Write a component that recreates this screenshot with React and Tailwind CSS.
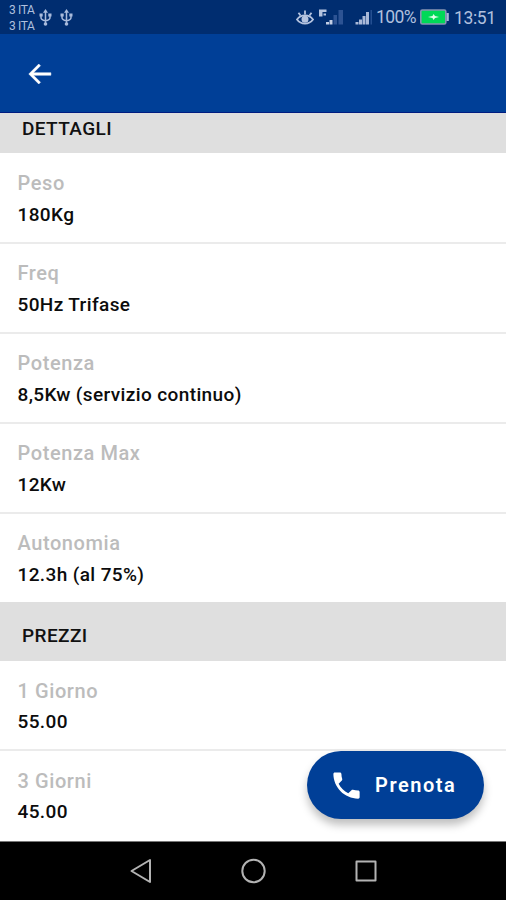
const details = [
  ['Peso', '180Kg'],
  ['Freq', '50Hz Trifase'],
  ['Potenza', '8,5Kw (servizio continuo)'],
  ['Potenza Max', '12Kw'],
  ['Autonomia', '12.3h (al 75%)'],
];

const prices = [
  ['1 Giorno', '55.00'],
  ['3 Giorni', '45.00'],
];

function Usb() {
  return (
    <svg className="h-[17px] w-[13px]" viewBox="0 0 13 17" fill="none" stroke="#a9bbdc" strokeWidth="1.500">
      <path d="M6.500 2v13M2 5v3.500c0 1.800 1.500 2.800 4.500 3.300M11 5v3.500c0 1.800-1.500 2.800-4.500 3.300" />
      <path d="M6.500 0 9 3.800H4z" fill="#a9bbdc" stroke="none" />
      <circle cx="6.500" cy="15" r="1.800" fill="#a9bbdc" stroke="none" />
      <path d="M.5 4.500h3.200v3H.5zM9.300 4.500h3.200v3H9.300z" fill="#a9bbdc" stroke="none" />
    </svg>
  );
}

function Eye() {
  return (
    <svg className="h-[17px] w-[18px]" viewBox="0 0 18 17" fill="none" stroke="#b4c3df" strokeWidth="1.800">
      <path d="M1 10.500C5 5 13 5 17 10.500 13 16 5 16 1 10.500z" />
      <circle cx="9" cy="10.300" r="2.600" fill="#b4c3df" />
      <path d="M9 5.500V1.500M4.500 6.500 2.500 3.800M13.500 6.500l2-2.700" />
    </svg>
  );
}

function RoamingSignal() {
  return (
    <svg className="h-[17px] w-[26px]" viewBox="0 0 26 17">
      <path d="M1 .5h7.500V3H4.500v4.500H1zM5.500 4.500h2.500v2H5.500z" fill="#b4c3df" />
      <path d="M8 13h3v2.500H8zM11.500 11h3v4.500h-3z" fill="#c2cee5" />
      <path d="M15.500 6h3.500v9.500h-3.500zM20.500 1H25v14.500h-4.500z" fill="#2d5393" />
    </svg>
  );
}

function Signal() {
  return (
    <svg className="h-[17px] w-[18px]" viewBox="0 0 18 17">
      <path d="M.5 13h3v2.500h-3zM4 10.500h3v5H4zM7.500 7H10.500v8.500h-3zM11 3h3v12.500h-3z" fill="#a9b9d8" />
      <path d="M15.500 1H17v14.500h-1.500z" fill="#244f91" />
    </svg>
  );
}

function Battery() {
  return (
    <svg className="h-[16px] w-[29px]" viewBox="0 0 29 16">
      <rect x=".8" y="1" width="25" height="14" rx="1.500" fill="#00d957" stroke="#8795b2" strokeWidth="1.600" />
      <path d="M26.500 4h2.300v8h-2.300z" fill="#a9b9d8" />
      <path d="M8 8l4.500-1 1-2 1.500 2 4 1-4 1-1.500 2-1-2z" fill="#e1ffe9" />
    </svg>
  );
}

function StatusBar() {
  return (
    <div className="flex h-[34px] shrink-0 items-start justify-between bg-[#002d70] pr-[11px] pl-[9px] text-[#b0c0de]">
      <div className="flex items-start">
        <div className="w-[30px] pt-[3px] text-[12px] leading-[15.500px] tracking-[-0.35px] whitespace-nowrap">
          <div>3 ITA</div>
          <div>3 ITA</div>
        </div>
        <div className="flex gap-[8px] pt-[9px]">
          <Usb />
          <Usb />
        </div>
      </div>
      <div className="flex items-start">
        <div className="flex pt-[9px]">
          <Eye />
          <div className="ml-[4px]"><RoamingSignal /></div>
          <div className="ml-[11px]"><Signal /></div>
        </div>
        <span className="ml-[3px] w-[40px] pt-[7px] text-[17.500px] leading-[20px] tracking-[-0.6px] whitespace-nowrap">100%</span>
        <div className="ml-[4px] pt-[9px]"><Battery /></div>
        <span className="ml-[5px] w-[41px] pt-[8px] text-[17.500px] leading-[20px] tracking-[-0.35px] whitespace-nowrap">13:51</span>
      </div>
    </div>
  );
}

function Rows({ items, className, textClassName, valueClassName }) {
  return (
    <div className={'flex shrink-0 flex-col font-medium whitespace-nowrap ' + className}>
      {items.map(([label, value]) => (
        <div key={label} className="h-[90px] shrink-0 border-b-2 border-[#ebebeb] pl-[17.500px] last:border-b-0">
          <div className={textClassName}>
            <div className="text-[20px] leading-[26px] tracking-[0.58px] text-[#bcbcbc]">{label}</div>
            <div className={'text-[19px] leading-[25px] tracking-[0.38px] text-[#0c0c0c] ' + valueClassName}>{value}</div>
          </div>
        </div>
      ))}
    </div>
  );
}

export default function App() {
  return (
    <div className="relative flex h-[900px] w-[506px] flex-col overflow-hidden bg-white font-['Roboto',sans-serif]">
      <StatusBar />
      <header className="flex h-[79px] shrink-0 items-center border-b border-[#001c80] bg-[#003f97] pl-[25px]">
        <svg className="mt-[2px] h-[30px] w-[30px]" viewBox="0 0 24 24" fill="#ffffff" stroke="#ffffff" strokeWidth="0.400" aria-label="Indietro">
          <path d="M20.700 11H6.800l5.600-5.600L11 4l-8 8 8 8 1.400-1.400L6.800 13h13.900z" />
        </svg>
      </header>
      <main className="flex h-[728px] shrink-0 flex-col overflow-hidden">
        <h2 className="h-[40px] shrink-0 bg-[#dfdfdf] pt-[4px] pl-[22px] text-[19px] leading-[24px] font-medium tracking-[0.4px] text-[#111111]">DETTAGLI</h2>
        <Rows items={details} className="h-[449px] pt-px" textClassName="pt-[16px]" valueClassName="mt-[6px]" />
        <h2 className="h-[59px] shrink-0 bg-[#dfdfdf] pt-[22px] pl-[22px] text-[19px] leading-[24px] font-medium tracking-[0.4px] text-[#111111]">PREZZI</h2>
        <Rows items={prices} className="" textClassName="pt-[17px]" valueClassName="mt-[5px]" />
      </main>
      <nav className="flex h-[59px] shrink-0 items-center border-t border-[#777777] bg-black">
        <svg className="ml-[129px] h-[28px] w-[24px]" viewBox="0 0 24 28" fill="none" stroke="#b3b3b3" strokeWidth="2" strokeLinejoin="round">
          <path d="M21 3v22L2.500 14z" />
        </svg>
        <svg className="ml-[87px] h-[28px] w-[27px]" viewBox="0 0 27 28" fill="none" stroke="#b3b3b3" strokeWidth="2">
          <circle cx="13.500" cy="14" r="11.200" />
        </svg>
        <svg className="ml-[87px] h-[28px] w-[24px]" viewBox="0 0 24 28" fill="none" stroke="#b3b3b3" strokeWidth="2" strokeLinejoin="round">
          <path d="M2.500 4.500h19v19h-19z" />
        </svg>
      </nav>
      <button className="absolute top-[751px] left-[307px] flex h-[68px] w-[177px] items-center rounded-full bg-[#003f97] pl-[22px] text-white shadow-[0_6px_9px_rgba(0,0,0,0.25)]">
        <svg className="h-[35px] w-[35px]" viewBox="0 0 24 24" fill="currentColor">
          <path d="M6.620 10.790c1.440 2.830 3.760 5.140 6.590 6.590l2.200-2.200c.27-.27.67-.36 1.020-.24 1.120.37 2.330.57 3.570.57.550 0 1 .45 1 1V20c0 .55-.45 1-1 1-9.390 0-17-7.610-17-17 0-.55.45-1 1-1h3.500c.55 0 1 .45 1 1 0 1.250.2 2.450.57 3.570.11.35.03.74-.25 1.020l-2.200 2.200z" />
        </svg>
        <span className="ml-[11px] text-[20px] leading-[26px] font-semibold tracking-[1.550px] whitespace-nowrap">Prenota</span>
      </button>
    </div>
  );
}
